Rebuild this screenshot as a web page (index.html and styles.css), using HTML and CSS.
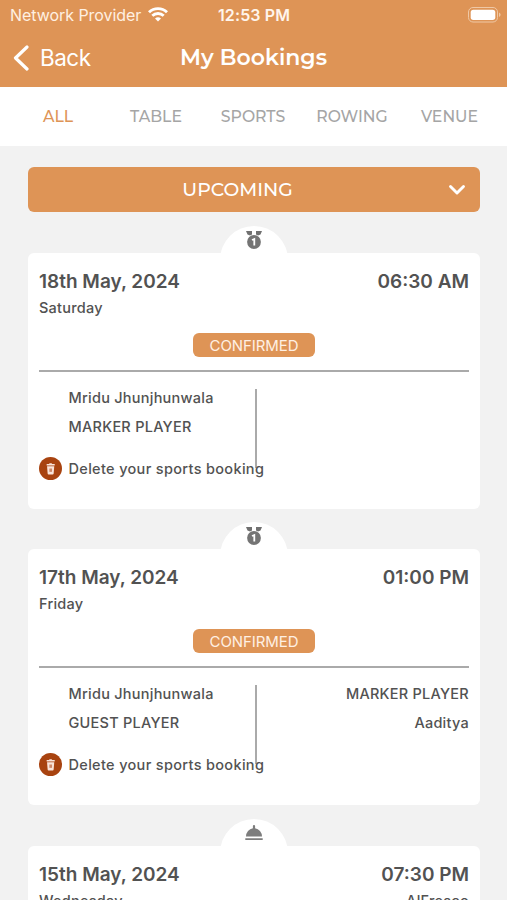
FILE: index.html
```html
<!DOCTYPE html>
<html lang="en">
<head>
<meta charset="utf-8">
<title>My Bookings</title>
<link rel="stylesheet" href="styles.css">
</head>
<body>
<svg class="defs" aria-hidden="true">
  <symbol id="medal" viewBox="0 0 18 20">
    <path fill="#707070" d="M1 1h6v3.600L5 5.500 2.500 4.600zM11 1h6l-1.500 3.600L13 5.500 11 4.600z"/>
    <circle cx="9" cy="12" r="6.900" fill="#747474"/>
    <path fill="none" stroke="#fff" stroke-width="1.800" d="M7 10 9.300 9V15.600"/>
  </symbol>
  <symbol id="bell" viewBox="0 0 18 18">
    <path fill="#7d7d7d" d="M1 13.500a8 8.500 0 0 1 6.900-8.300V3a1.100 1.100 0 0 1 2.200 0v2.200A8 8.500 0 0 1 17 13.500zM.3 15.300h17.400v1.700H.3z"/>
  </symbol>
  <symbol id="trash" viewBox="0 0 24 24">
    <circle cx="12" cy="12" r="12" fill="#a84310"/>
    <path fill="#f9e4da" d="M8 7.300h2.400l.7-.8h2l.7.800H16.400v1.500H8zM8.400 9.600h7.500l-.6 7.600q-.1 1-1 1h-4.300q-.9 0-1-1z"/>
    <path fill="#cf8a6a" d="M10.800 12h2.800v3.500h-2.800z"/>
  </symbol>
</svg>
<header class="header">
  <div class="status">
    <span class="carrier">Network Provider</span>
    <svg class="wifi" viewBox="0 0 20 15"><g fill="none" stroke="#fff" stroke-width="2.900"><path d="M1 5.200a13 13 0 0 1 18 0"/><path d="M4.300 8.700a8.300 8.300 0 0 1 11.400 0"/></g><path fill="#fff" d="M7 11.500a4.500 4.500 0 0 1 6 0l-3 3z"/></svg>
    <span class="clock">12:53 PM</span>
    <svg class="battery" viewBox="0 0 33 16"><rect x=".5" y=".5" width="29" height="14.500" rx="4.500" fill="none" stroke="#efc8a5"/><rect x="2.700" y="2.700" width="24.600" height="10.200" rx="2.700" fill="#fff"/><path d="M31 5.500q1.600.8 1.600 2.300T31 10z" fill="#efc8a5"/></svg>
  </div>
  <div class="nav">
    <a class="back"><svg viewBox="0 0 16 26"><path d="M14 2 2.500 13 14 24" fill="none" stroke="#fff" stroke-width="3.200" stroke-linecap="round" stroke-linejoin="round"/></svg><span>Back</span></a>
    <h1 class="title"><span>My Bookings</span></h1>
  </div>
</header>
<nav class="tabs">
  <a class="tab active"><span>ALL</span></a>
  <a class="tab"><span>TABLE</span></a>
  <a class="tab"><span>SPORTS</span></a>
  <a class="tab"><span>ROWING</span></a>
  <a class="tab"><span>VENUE</span></a>
</nav>
<main class="content">
  <div class="select"><span>UPCOMING</span><svg class="chevron" viewBox="0 0 18 12"><path d="M2.500 2.500 9 9l6.500-6.500" fill="none" stroke="#fff" stroke-width="2.900" stroke-linecap="round" stroke-linejoin="round"/></svg></div>
  <article class="card">
    <div class="notch"><svg class="medal"><use href="#medal"/></svg></div>
    <div class="row when"><span class="date">18th May, 2024</span><span class="time">06:30 AM</span></div>
    <div class="row day"><span>Saturday</span></div>
    <div class="badge"><span>CONFIRMED</span></div>
    <div class="players">
      <div class="left"><p>Mridu Jhunjhunwala</p><p>MARKER PLAYER</p></div>
      <div class="right"></div>
    </div>
    <div class="delete"><svg><use href="#trash"/></svg><span>Delete your sports booking</span></div>
  </article>
  <article class="card">
    <div class="notch"><svg class="medal"><use href="#medal"/></svg></div>
    <div class="row when"><span class="date">17th May, 2024</span><span class="time">01:00 PM</span></div>
    <div class="row day"><span>Friday</span></div>
    <div class="badge"><span>CONFIRMED</span></div>
    <div class="players">
      <div class="left"><p>Mridu Jhunjhunwala</p><p>GUEST PLAYER</p></div>
      <div class="right"><p>MARKER PLAYER</p><p>Aaditya</p></div>
    </div>
    <div class="delete"><svg><use href="#trash"/></svg><span>Delete your sports booking</span></div>
  </article>
  <article class="card last">
    <div class="notch"><svg class="bell"><use href="#bell"/></svg></div>
    <div class="row when"><span class="date">15th May, 2024</span><span class="time">07:30 PM</span></div>
    <div class="row day"><span>Wednesday</span><span>AlFresco</span></div>
  </article>
</main>
</body>
</html>
```
FILE: styles.css
```css
* { box-sizing: border-box; }
body {
  margin: 0;
  height: 900px;
  overflow: hidden;
  display: flex;
  flex-direction: column;
  background: #f2f2f2;
  color: #525252;
  font-family: Inter, "Liberation Sans", sans-serif;
  white-space: nowrap;
}
p, h1 { margin: 0; }
svg { display: block; flex: none; }
.defs { position: absolute; width: 0; height: 0; }
.header { flex: none; height: 87px; background: #de9456; color: #fff; }
.status { display: flex; align-items: center; height: 30px; padding: 0 7px 0 10px; font-size: 16px; }
.carrier { width: 138px; letter-spacing: -.05px; color: #fff0e2; }
.wifi { width: 20px; height: 15px; margin-top: -1px; }
.clock { margin-left: 50px; font-weight: 600; letter-spacing: .1px; color: #fff5ec; }
.battery { width: 33px; height: 16px; margin: -1px -.5px 0 auto; }
.nav { display: grid; grid-template-columns: 1fr auto 1fr; align-items: center; height: 56px; padding: 0 13px; }
.back { display: flex; align-items: center; gap: 11px; font-size: 22.500px; line-height: 26px; letter-spacing: -.5px; }
.back svg { width: 16px; height: 26px; }
.title { font: 600 22px/30px Montserrat, Lato, sans-serif; }
.tabs { flex: none; display: grid; grid-template-columns: 116px 80px 114px 84px 111px; height: 59px; padding-top: 1px; background: #fff; color: #a5a5a5; }
.tab { display: flex; align-items: center; justify-content: center; font: 550 15.700px/20px Montserrat, Inter, sans-serif; }
.active { color: #de9456; }
.content { flex: 1; min-height: 0; overflow: hidden; padding: 21px 27px 0 28px; }
.select {
  display: grid;
  grid-template-columns: 419px 18px;
  align-items: center;
  height: 45px;
  border-radius: 6px;
  background: #de9456;
  color: #fff;
  font: 550 18.800px/24px Montserrat, Inter, sans-serif;
  text-align: center;
}
.chevron { width: 18px; height: 12px; margin-left: 1px; margin-top: 1px; }
.card { position: relative; height: 256px; margin-top: 40.400px; padding: 15px 11px; border-radius: 6px; background: #fff; }
.select + .card { margin-top: 41px; }
.last { height: 54px; border-radius: 6px 6px 0 0; }
.notch { position: absolute; top: -27px; left: 192px; width: 68px; height: 68px; border-radius: 50%; background: #fff; display: flex; justify-content: center; }
.medal { width: 18px; height: 20px; margin-top: 3.500px; }
.bell { width: 18px; height: 18px; margin-top: 4.500px; }
.row { position: relative; display: flex; justify-content: space-between; }
.when { height: 26px; font-size: 19px; line-height: 28px; font-weight: 570; }
.day { height: 20px; margin-top: 4px; font-size: 14.500px; line-height: 20px; font-weight: 500; letter-spacing: .25px; }
.badge { width: 122px; height: 24px; margin: 14.500px auto 13.500px; border-radius: 6px; background: #de9456; color: #fff0e3; font-size: 15px; line-height: 25px; text-align: center; letter-spacing: -.1px; }
.players { display: grid; grid-template-columns: 216px 1fr; height: 96px; border-top: 2px solid #aaa; font-size: 14.500px; line-height: 29px; font-weight: 500; padding-top: 17px; }
.left { width: 218px; height: 79px; padding-left: 29.500px; border-right: 2px solid #aaa; }
.left p, .right p { position: relative; top: -6px; letter-spacing: .25px; }
.right { text-align: right; }
.delete { position: relative; display: flex; align-items: center; gap: 6.500px; height: 24px; margin-top: -10px; font-size: 14.500px; font-weight: 500; letter-spacing: .33px; }
.delete svg { width: 23px; height: 23px; }
```
